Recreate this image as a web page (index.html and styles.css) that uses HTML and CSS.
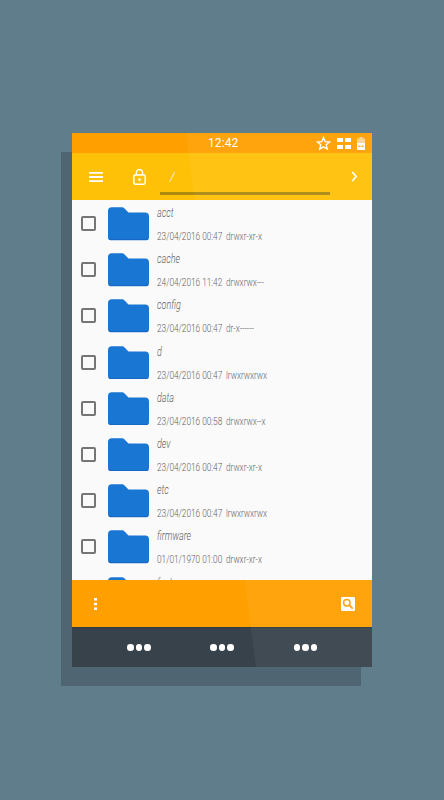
FILE: index.html
```html
<!DOCTYPE html>
<html lang="en">
<head>
  <meta charset="UTF-8">
  <meta name="viewport" content="width=device-width, initial-scale=1.0">
  <title>Files</title>
  <link rel="stylesheet" href="styles.css">
</head>
<body>
  <svg class="defs" width="0" height="0">
    <symbol id="folder" viewBox="0 0 42 34">
      <path d="M4 0h10.500a3 3 0 0 1 2.200 1l4.300 4.500h17a4 4 0 0 1 4 4V30a4 4 0 0 1-4 4H4a4 4 0 0 1-4-4V4a4 4 0 0 1 4-4z" fill="#1976d2"/>
      <path d="M0 30a4 4 0 0 0 4 4h34a4 4 0 0 0 4-4v-1a4 4 0 0 1-4 4H4a4 4 0 0 1-4-4z" fill="#1565c0"/>
    </symbol>
  </svg>

  <div class="phone">
    <div class="status-bar">
      <span class="clock">12:42</span>
      <div class="status-icons">
        <svg width="15" height="15" viewBox="0 0 15 15"><path d="M7.500 1.600l1.700 4.100 4.400.3-3.400 2.800 1.100 4.300-3.800-2.300-3.800 2.300 1.100-4.300L1.400 6l4.400-.3z" fill="none" stroke="#fff" stroke-width="1.400"/></svg>
        <svg width="14" height="11" viewBox="0 0 14 11"><path d="M0 0h6v4H0zM8 0h6v4H8zM0 7h6v4H0zM8 7h6v4H8z" fill="#fff"/></svg>
        <svg width="8" height="13" viewBox="0 0 8 13"><path d="M2.500 0h3v1.500H8V6H0V1.500h2.500z" fill="#fff" opacity=".55"/><path d="M0 6h8v7H0z" fill="#fff"/><path d="M1.500 8.500h2v1.500h-2zM4.500 8.500h2v1.500h-2z" fill="#ffa514"/></svg>
      </div>
    </div>

    <div class="toolbar">
      <svg class="menu-icon" width="14" height="10" viewBox="0 0 14 10"><path d="M0 0h14v1.800H0zM0 4.100h14v1.800H0zM0 8.200h14V10H0z" fill="#fff"/></svg>
      <svg class="lock-icon" width="13" height="16" viewBox="0 0 13 16"><path d="M3.400 6V3.700a3.100 3.100 0 0 1 6.200 0V6" fill="none" stroke="#fff" stroke-width="1.400"/><rect x=".8" y="6" width="11.400" height="9.200" rx="1.400" fill="none" stroke="#fff" stroke-width="1.500"/><circle cx="6.500" cy="10.600" r="1.300" fill="#fff"/></svg>
      <div class="path-box">
        <span class="path-text">/</span>
        <div class="path-scroll"></div>
      </div>
      <svg class="next-icon" width="7" height="11" viewBox="0 0 7 11"><path d="M1.200 1l4 4.500-4 4.500" fill="none" stroke="#fff" stroke-width="1.700"/></svg>
    </div>

    <ul class="file-list">
      <li class="file-row">
        <span class="check"></span>
        <svg class="folder"><use href="#folder"/></svg>
        <div class="file-info">
          <div class="file-name">acct</div>
          <div class="file-meta"><span>23/04/2016 00:47</span><span>drwxr-xr-x</span></div>
        </div>
      </li>
      <li class="file-row">
        <span class="check"></span>
        <svg class="folder"><use href="#folder"/></svg>
        <div class="file-info">
          <div class="file-name">cache</div>
          <div class="file-meta"><span>24/04/2016 11:42</span><span>drwxrwx---</span></div>
        </div>
      </li>
      <li class="file-row">
        <span class="check"></span>
        <svg class="folder"><use href="#folder"/></svg>
        <div class="file-info">
          <div class="file-name">config</div>
          <div class="file-meta"><span>23/04/2016 00:47</span><span>dr-x------</span></div>
        </div>
      </li>
      <li class="file-row">
        <span class="check"></span>
        <svg class="folder"><use href="#folder"/></svg>
        <div class="file-info">
          <div class="file-name">d</div>
          <div class="file-meta"><span>23/04/2016 00:47</span><span>lrwxrwxrwx</span></div>
        </div>
      </li>
      <li class="file-row">
        <span class="check"></span>
        <svg class="folder"><use href="#folder"/></svg>
        <div class="file-info">
          <div class="file-name">data</div>
          <div class="file-meta"><span>23/04/2016 00:58</span><span>drwxrwx--x</span></div>
        </div>
      </li>
      <li class="file-row">
        <span class="check"></span>
        <svg class="folder"><use href="#folder"/></svg>
        <div class="file-info">
          <div class="file-name">dev</div>
          <div class="file-meta"><span>23/04/2016 00:47</span><span>drwxr-xr-x</span></div>
        </div>
      </li>
      <li class="file-row">
        <span class="check"></span>
        <svg class="folder"><use href="#folder"/></svg>
        <div class="file-info">
          <div class="file-name">etc</div>
          <div class="file-meta"><span>23/04/2016 00:47</span><span>lrwxrwxrwx</span></div>
        </div>
      </li>
      <li class="file-row">
        <span class="check"></span>
        <svg class="folder"><use href="#folder"/></svg>
        <div class="file-info">
          <div class="file-name">firmware</div>
          <div class="file-meta"><span>01/01/1970 01:00</span><span>drwxr-xr-x</span></div>
        </div>
      </li>
      <li class="file-row">
        <span class="check"></span>
        <svg class="folder"><use href="#folder"/></svg>
        <div class="file-info">
          <div class="file-name">fonts</div>
        </div>
      </li>
    </ul>

    <div class="action-bar">
      <svg width="3" height="12" viewBox="0 0 3 12"><path d="M0 0h3v2.600H0zM0 4.700h3v2.600H0zM0 9.400h3V12H0z" fill="#fff"/></svg>
      <svg width="14" height="14" viewBox="0 0 14 14"><rect width="14" height="14" rx="1" fill="#fff"/><circle cx="5.800" cy="5.800" r="3.200" fill="none" stroke="#ffa000" stroke-width="1.500"/><path d="M8.200 8.200l3.500 3.500" stroke="#ffa000" stroke-width="1.800"/></svg>
    </div>

    <div class="nav-bar">
      <div class="dots"><i></i><i></i><i></i></div>
      <div class="dots"><i></i><i></i><i></i></div>
      <div class="dots"><i></i><i></i><i></i></div>
    </div>

    <div class="shine"></div>
  </div>
</body>
</html>
```

FILE: styles.css
```css
* {
  box-sizing: border-box;
}
body {
  margin: 0;
  height: 800px;
  overflow: hidden;
  background-color: #607d8b;
  font-family: "Roboto", sans-serif;
}
.defs {
  display: block;
}
.phone {
  position: relative;
  width: 300px;
  height: 534px;
  margin: 133px 0 0 72px;
  display: flex;
  flex-direction: column;
  background: #fafafa;
  box-shadow: -11px 19px 0 #4f6672;
}
.status-bar {
  height: 20px;
  flex: none;
  display: flex;
  align-items: center;
  justify-content: space-between;
  padding: 0 7px 0 136px;
  background: #ffa000;
  color: #fff;
}
.clock {
  font-size: 12px;
  letter-spacing: 0.1px;
}
.status-icons {
  display: flex;
  align-items: center;
  gap: 6px;
}
.toolbar {
  height: 47px;
  flex: none;
  display: flex;
  align-items: center;
  padding: 0 14px 0 17px;
  background: #ffc107;
}
.lock-icon {
  margin-left: 30px;
}
.path-box {
  flex: 1;
  margin: 0 21px 0 14px;
  align-self: stretch;
  display: flex;
  flex-direction: column;
  justify-content: flex-end;
}
.path-text {
  color: #fff;
  font-size: 12px;
  font-style: italic;
  font-weight: 300;
  line-height: 14px;
  padding-left: 10px;
}
.path-scroll {
  height: 3px;
  margin: 8px 0 5px;
  background: #ab8a10;
}
.file-list {
  flex: 1;
  min-height: 0;
  margin: 0;
  padding: 0;
  list-style: none;
  overflow: hidden;
}
.file-row {
  height: 46.2px;
  display: flex;
  align-items: flex-start;
  padding: 7px 0 0 9px;
}
.check {
  flex: none;
  width: 15px;
  height: 15px;
  margin: 9px 12px 0 0;
  border: 2px solid #757575;
  border-radius: 2px;
}
.folder {
  flex: none;
  width: 41px;
  height: 33.500px;
}
.file-info {
  margin: -1px 0 0 8px;
  color: #606060;
  font-weight: 300;
}
/* the font in the shot is a condensed one, none installed so squeeze roboto */
.file-name {
  font-size: 12.500px;
  font-style: italic;
  line-height: 14px;
  transform: scaleX(0.72);
  transform-origin: left center;
}
.file-meta {
  display: flex;
  gap: 5px;
  margin-top: 11px;
  font-size: 11px;
  line-height: 12px;
  transform: scaleX(0.75);
  transform-origin: left center;
}
.action-bar {
  height: 47px;
  flex: none;
  display: flex;
  align-items: center;
  justify-content: space-between;
  padding: 0 17px 0 22px;
  background: #ffa000;
}
.nav-bar {
  height: 40px;
  flex: none;
  display: flex;
  align-items: center;
  justify-content: space-between;
  padding: 0 55px;
  background: #37424a;
  border-top: 1px solid #2f3b42;
}
.dots {
  display: flex;
  gap: 2px;
}
.dots i {
  width: 6.500px;
  height: 6.500px;
  border-radius: 50%;
  background: #fff;
}
.shine {
  position: absolute;
  inset: 0;
  pointer-events: none;
  background: rgba(255,255,255,0.05);
  clip-path: polygon(114px 0, 100% 0, 100% 100%, 184px 100%);
}
```
